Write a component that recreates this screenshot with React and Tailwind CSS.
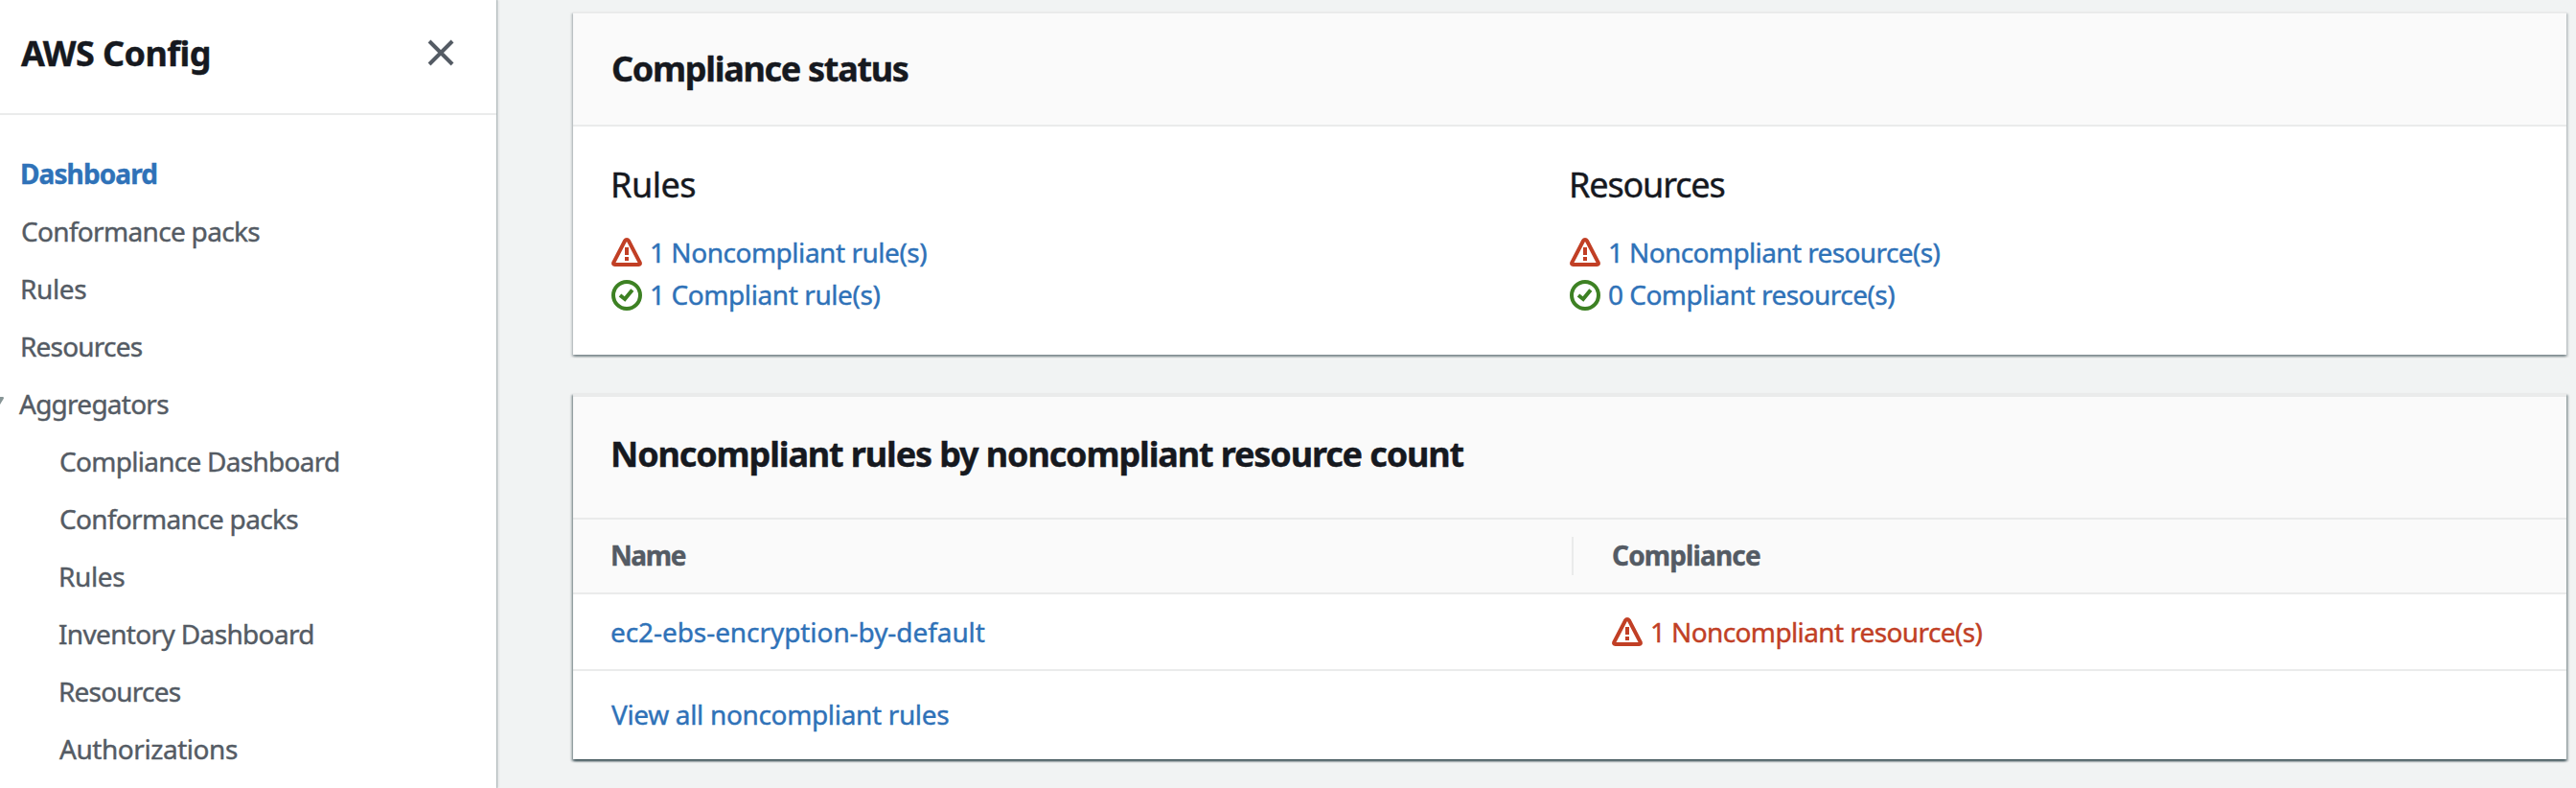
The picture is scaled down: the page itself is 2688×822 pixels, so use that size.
const WarningIcon = () => (
  <svg viewBox="0 0 16 16" className="mt-0.5 size-8 shrink-0" fill="none" stroke="#c13f25" strokeWidth="2" strokeLinejoin="round">
    <path d="M8 1q.6 0 .9.5L14.8 12.8q.5 1.2-.6 1.2H1.8q-1.1 0-.6-1.2L7.1 1.5Q7.4 1 8 1z" />
    <path d="M8 5v4M8 10v2" />
  </svg>
);

const SuccessIcon = () => (
  <svg viewBox="0 0 16 16" className="mt-0.5 size-8 shrink-0" fill="none" stroke="#3d8123" strokeWidth="2">
    <circle cx="8" cy="8" r="7" />
    <path d="M4.5 8L7 10l3.9-4.8" />
  </svg>
);

const CloseIcon = () => (
  <svg viewBox="0 0 16 16" className="size-8" fill="none" stroke="#545b64" strokeWidth="2">
    <path d="M2 2l12 12M14 2L2 14" />
  </svg>
);

const navItems = [
  { label: "Dashboard", style: "pl-[21px] font-bold text-[#2f72b8] tracking-[-0.9px]" },
  { label: "Conformance packs", style: "pl-[22px] tracking-[-0.68px]" },
  { label: "Rules", style: "pl-[21px] tracking-[-0.4px]" },
  { label: "Resources", style: "pl-[21px] tracking-[-0.8px]" },
  { label: "Aggregators", style: "pl-5 tracking-[-0.75px]", expandable: true },
  { label: "Compliance Dashboard", style: "pl-[62px] tracking-[-0.72px]" },
  { label: "Conformance packs", style: "pl-[62px] tracking-[-0.68px]" },
  { label: "Rules", style: "pl-[61px] tracking-[-0.4px]" },
  { label: "Inventory Dashboard", style: "pl-[61px] tracking-[-0.65px]" },
  { label: "Resources", style: "pl-[61px] tracking-[-0.8px]" },
  { label: "Authorizations", style: "pl-[62px] tracking-[-0.45px]" },
];

function Sidebar() {
  return (
    <aside className="z-10 w-[518px] shrink-0 bg-white shadow-[1px_0_0_0_rgba(0,28,36,0.2),2px_0_2px_0_rgba(0,28,36,0.12)]">
      <header className="flex h-[120px] items-center justify-between border-b-2 border-[#eaebeb] pr-[42px] pb-2 pl-[22px]">
        <h2 className="pt-0.5 text-[36px] font-bold tracking-[-0.6px] text-[#16191f]">AWS Config</h2>
        <button type="button" aria-label="Close">
          <CloseIcon />
        </button>
      </header>
      <nav className="pt-[31px]">
        <ul>
          {navItems.map((item, i) => (
            <li key={i} className={`relative h-15 leading-[60px] ${item.style}`}>
              {item.expandable && (
                <svg viewBox="0 0 5 9" className="absolute top-[23px] left-0 h-[9px] w-[5px]" fill="#879596">
                  <path d="M0 0h3.2q1.2 0.4 0.6 1.8L0 8z" />
                </svg>
              )}
              <a>{item.label}</a>
            </li>
          ))}
        </ul>
      </nav>
    </aside>
  );
}

function StatusLine({ icon, children, className }) {
  return (
    <div className="flex h-11 items-center gap-2">
      {icon}
      <a className={className}>{children}</a>
    </div>
  );
}

function CompliancePanel() {
  return (
    <section className="h-[358px] border-t-2 border-[#eaebeb] bg-white shadow-[0_2px_2px_0_rgba(0,28,36,0.3),2px_2px_2px_0_rgba(0,28,36,0.15),-2px_2px_2px_0_rgba(0,28,36,0.15)]">
      <header className="flex h-[118px] items-center border-b-2 border-[#eaebeb] bg-[#fafafa] px-10">
        <h2 className="text-[36px] font-bold tracking-[-1.3px] text-[#16191f]">Compliance status</h2>
      </header>
      <div className="grid grid-cols-2 px-10 pt-[37px]">
        <div className="text-[#2f72b8]">
          <h3 className="mb-6 -ml-px text-[36px] leading-[48px] tracking-[-0.5px] text-[#16191f]">Rules</h3>
          <StatusLine icon={<WarningIcon />} className="tracking-[-0.47px]">1 Noncompliant rule(s)</StatusLine>
          <StatusLine icon={<SuccessIcon />} className="tracking-[-0.41px]">1 Compliant rule(s)</StatusLine>
        </div>
        <div className="text-[#2f72b8]">
          <h3 className="mb-6 -ml-px text-[36px] leading-[48px] tracking-[-1.15px] text-[#16191f]">Resources</h3>
          <StatusLine icon={<WarningIcon />} className="tracking-[-0.62px]">1 Noncompliant resource(s)</StatusLine>
          <StatusLine icon={<SuccessIcon />} className="tracking-[-0.52px]">0 Compliant resource(s)</StatusLine>
        </div>
      </div>
    </section>
  );
}

function RulesPanel() {
  return (
    <section className="h-[382px] border-t-4 border-[#eaebeb] bg-white shadow-[0_2px_2px_0_rgba(0,28,36,0.5),2px_2px_2px_0_rgba(0,28,36,0.28),-2px_2px_2px_0_rgba(0,28,36,0.28)]">
      <header className="flex h-32 items-center border-b-2 border-[#eaebeb] bg-[#fafafa] px-[39px] pb-1.5">
        <h2 className="text-[36px] font-bold tracking-[-1.13px] text-[#16191f]">
          Noncompliant rules by noncompliant resource count
        </h2>
      </header>
      <div className="grid h-[78px] grid-cols-[1042px_1fr] items-center border-b-2 border-[#eaebeb] bg-[#fafafa] font-bold">
        <div className="pb-0.5 pl-[39px] tracking-[-1.4px]">Name</div>
        <div className="flex h-10 items-center border-l-2 border-[#eaebeb] pb-0.5 pl-10 tracking-[-0.85px]">Compliance</div>
      </div>
      <div className="grid h-20 grid-cols-[1084px_1fr] items-center border-b-2 border-[#eaebeb]">
        <a className="pl-[39px] tracking-[-0.07px] text-[#2f72b8]">ec2-ebs-encryption-by-default</a>
        <div className="text-[#c13f25]">
          <StatusLine icon={<WarningIcon />} className="tracking-[-0.62px]">1 Noncompliant resource(s)</StatusLine>
        </div>
      </div>
      <div className="flex h-[92px] items-center pb-0.5 pl-10">
        <a className="tracking-[-0.34px] text-[#2f72b8]">View all noncompliant rules</a>
      </div>
    </section>
  );
}

export default function App() {
  return (
    <div className="flex h-[822px] w-[2688px] overflow-hidden bg-[#f1f3f3] font-['Noto_Sans',sans-serif] text-[28px] text-[#545b64] [-webkit-text-stroke:0.4px]">
      <Sidebar />
      <main className="flex flex-1 flex-col gap-10 pt-3 pr-2.5 pl-20">
        <CompliancePanel />
        <RulesPanel />
      </main>
    </div>
  );
}
